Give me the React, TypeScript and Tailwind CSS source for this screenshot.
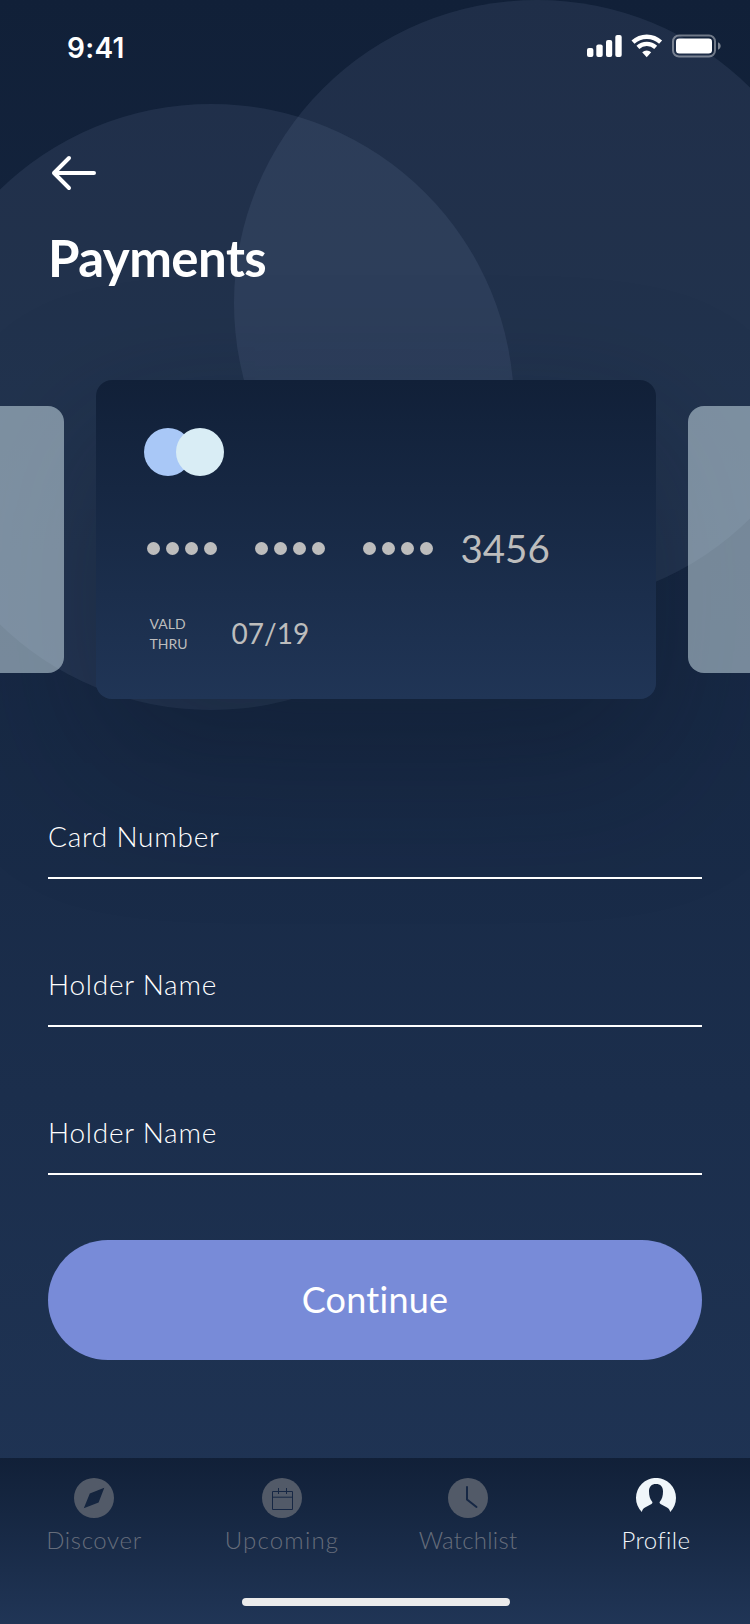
import type { ReactNode } from "react";

function StatusBar() {
  return (
    <header className="flex h-[92px] items-center justify-between pl-[67px] pr-[29px]">
      <span className="pt-[3px] font-['Inter',sans-serif] text-[28px] font-semibold leading-8 tracking-[0.3px]">9:41</span>
      <svg width="135" height="24" viewBox="586 34 135 24" fill="white" className="block">
        <rect x="587" y="48" width="6.4" height="9" rx="2" />
        <rect x="596.3" y="44.6" width="6.4" height="12.4" rx="2" />
        <rect x="606" y="40" width="6.2" height="17" rx="2" />
        <rect x="615.3" y="35" width="6.4" height="22" rx="2" />
        <g fill="none" stroke="white">
          <path d="M633 42.2a20.2 20.2 0 0 1 27.600 0" strokeWidth="4.4" />
          <path d="M637.900 47.400a13 13 0 0 1 17.800 0" strokeWidth="4.200" />
        </g>
        <path d="M646.700 57.200 642.200 52.300a6.700 6.700 0 0 1 9 0z" />
        <rect x="673" y="35.500" width="42" height="21" rx="6" fill="none" stroke="white" strokeOpacity=".4" strokeWidth="2" />
        <rect x="676" y="38.500" width="36" height="15" rx="3.300" />
        <path d="M718 42.300c3.600 1.500 3.600 6 0 7.500z" fillOpacity=".45" />
      </svg>
    </header>
  );
}

function Dots() {
  return (
    <span className="flex gap-[5.7px]">
      {[0, 1, 2, 3].map((i) => (
        <span key={i} className="size-[13.3px] shrink-0 rounded-full bg-[#bdbdbd]" />
      ))}
    </span>
  );
}

function CreditCard() {
  return (
    <article className="flex h-[319.400px] w-[560px] shrink-0 flex-col rounded-2xl bg-linear-to-b from-[#112038] to-[#203556] px-12 pt-12 text-[#bdbdbd] shadow-[0_60px_150px_rgba(12,20,34,0.35)]">
      <div className="flex">
        <span className="size-12 rounded-full bg-[#a9c8f7]" />
        <span className="-ml-4 size-12 rounded-full bg-[#d9edf5]" />
      </div>
      <div className="mt-12 flex h-12 items-center pl-[3px] pt-px">
        <div className="flex gap-[37.600px]">
          <Dots />
          <Dots />
          <Dots />
        </div>
        <span className="ml-[27.500px] pb-[2px] text-[38.500px] leading-[48px]">3456</span>
      </div>
      <div className="mt-[42px] flex items-center pl-[5.500px]">
        <span className="w-[82px] text-[14px] leading-5">
          VALD
          <br />
          THRU
        </span>
        <span className="pb-[2px] text-[28px] leading-9">07/19</span>
      </div>
    </article>
  );
}

function Field({ label }: { label: string }) {
  return (
    <label className="flex h-[148px] flex-col justify-end border-b-2 border-white pb-[22px] text-[28px] font-light leading-[38px] tracking-[0.75px]">
      {label}
    </label>
  );
}

function Tab({ label, active, className, children }: { label: string; active?: boolean; className: string; children: ReactNode }) {
  return (
    <button className={`flex shrink-0 flex-col items-center ${className} ${active ? "text-[#f0f6fa]" : "text-[#525a68]"}`}>
      <svg width="40" height="40" viewBox="0 0 40 40" fill="currentColor">
        {children}
      </svg>
      <span className={`mt-[6px] text-2xl font-light leading-8 ${active ? "" : "text-[#666d7b]"}`}>{label}</span>
    </button>
  );
}

export default function App() {
  return (
    <div className="relative isolate flex h-[1624px] w-[750px] flex-col overflow-hidden bg-linear-to-b from-[#112038] to-[#203556] font-['Lato',sans-serif] text-white [font-variant-ligatures:none]">
      <div className="absolute -left-[92px] top-[104px] -z-10 size-[606px] rounded-full bg-[#a0afdc]/10" />
      <div className="absolute left-[234px] top-0 -z-10 size-[606px] rounded-full bg-[#a0afdc]/10" />
      <StatusBar />
      <div className="px-12 pt-[61px]">
        <button aria-label="Back" className="block h-10">
          <svg width="52" height="40" viewBox="48 153 52 40" fill="none" stroke="white" strokeWidth="4" strokeLinecap="round" strokeLinejoin="round">
            <path d="M94 173H54M69 158 54 173 69 188" />
          </svg>
        </button>
        <h1 className="mt-[35px] text-[51px] font-bold leading-[60px] tracking-[-0.55px]">Payments</h1>
      </div>
      <div className="mt-[92px] flex justify-center gap-8 pl-[2px]">
        <div className="z-10 mt-[26px] h-[267.400px] w-[560px] shrink-0 rounded-2xl bg-[#d8ecf4]/50" />
        <CreditCard />
        <div className="z-10 mt-[26px] h-[267.400px] w-[560px] shrink-0 rounded-2xl bg-[#d8ecf4]/50" />
      </div>
      <main className="mt-[31.600px] flex flex-col px-12">
        <Field label="Card Number" />
        <Field label="Holder Name" />
        <Field label="Holder Name" />
        <button className="mt-[65px] h-[120px] rounded-full bg-[#788bd8] pb-[2px] text-[36px] leading-none tracking-[0.25px]">Continue</button>
      </main>
      <nav className="mt-auto flex h-[166px] flex-col bg-linear-to-b from-[#112038] to-[#203556] pt-5">
        <div className="flex">
          <Tab label="Discover" className="w-[188px] tracking-[0.65px]">
            <path fillRule="evenodd" d="M20 0a20 20 0 1 1 0 40a20 20 0 1 1 0-40zM30.300 9.700 15.800 15.500 9.800 30.300 24.600 24.500z" />
          </Tab>
          <Tab label="Upcoming" className="w-[188px] tracking-[1.2px]">
            <circle cx="20" cy="20" r="20" />
            <path d="M10.500 13.500h20v18h-20zM10.500 19.200h20M16.500 10v6M24.500 10v6" fill="none" stroke="#162744" strokeWidth="1" />
          </Tab>
          <Tab label="Watchlist" className="w-[184px] tracking-[0.25px]">
            <circle cx="20" cy="20" r="20" />
            <path d="M19 9v12.500l9.500 7.500" fill="none" stroke="#162744" strokeWidth="2" strokeLinecap="round" />
          </Tab>
          <Tab label="Profile" className="w-[192px] tracking-[0.45px]" active>
            <path d="M5.800 34A20 20 0 1 1 34.200 34C33.500 31.500 32.500 30.200 31 29.500L24.500 26C23.500 25.300 23.200 24.500 24 23.500C26 21 27 18 27 13.500C27 8.500 24.500 6 20 6S13 8.500 13 13.500C13 18 14 21 16 23.500C16.800 24.500 16.500 25.300 15.500 26L9 29.500C7.500 30.200 6.500 31.500 5.800 34z" />
          </Tab>
        </div>
        <div className="mb-[18px] ml-[242px] mt-auto h-2 w-[268px] rounded-full bg-[#ebebeb]" />
      </nav>
    </div>
  );
}
